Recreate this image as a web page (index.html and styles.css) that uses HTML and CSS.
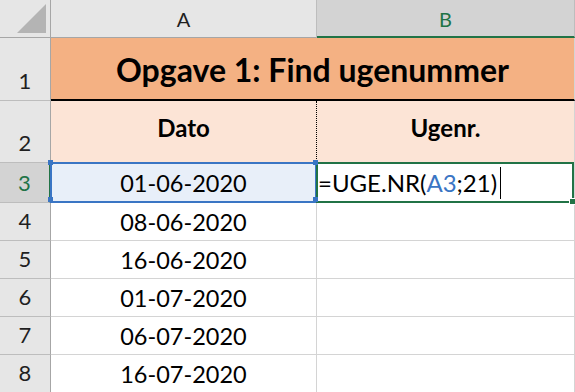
FILE: index.html
```html
<!DOCTYPE html>
<html lang="da">
<head>
  <meta charset="UTF-8">
  <title>Opgave 1</title>
  <link rel="stylesheet" href="styles.css">
</head>
<body>
  <div class="sheet">
    <!-- kolonneoverskrifter -->
    <div class="corner"><span class="tri"></span></div>
    <div class="colhead">A</div>
    <div class="colhead active">B</div>

    <div class="rowhead">1</div>
    <div class="cell title">Opgave 1: Find ugenummer</div>

    <div class="rowhead">2</div>
    <div class="cell head dotted">Dato</div>
    <div class="cell head">Ugenr.</div>

    <div class="rowhead active">3</div>
    <div class="cell date ref">01-06-2020</div>
    <div class="cell edit">=UGE.NR(<span class="refText">A3</span>;21)<span class="caret"></span></div>

    <div class="rowhead">4</div>
    <div class="cell date">08-06-2020</div>
    <div class="cell"></div>

    <div class="rowhead">5</div>
    <div class="cell date">16-06-2020</div>
    <div class="cell"></div>

    <div class="rowhead">6</div>
    <div class="cell date">01-07-2020</div>
    <div class="cell"></div>

    <div class="rowhead">7</div>
    <div class="cell date">06-07-2020</div>
    <div class="cell"></div>

    <div class="rowhead">8</div>
    <div class="cell date">16-07-2020</div>
    <div class="cell"></div>
  </div>
</body>
</html>
```

FILE: styles.css
```css
*{
  margin: 0;
  padding: 0;
  box-sizing: border-box;
}
body{
  background-color: #ffffff;
  font-family: Lato, "Open Sans", sans-serif;
  overflow: hidden;
}
.sheet{
  display: grid;
  grid-template-columns: 51px 266px 258px;
  grid-template-rows: 38px 63px 62px 40px repeat(5, 38px);
}
.corner{
  background-color: #e6e6e6;
  border-right: 1px solid #a6a6a6;
  border-bottom: 1px solid #a6a6a6;
  position: relative;
}
.tri{
  position: absolute;
  right: 4px;
  bottom: 4px;
  width: 0;
  height: 0;
  border-left: 29px solid transparent;
  border-bottom: 29px solid #b4b4b4;
}
.colhead{
  background-color: #e6e6e6;
  border-right: 1px solid #bdbdbd;
  border-bottom: 1px solid #a6a6a6;
  display: flex;
  align-items: center;
  justify-content: center;
  font-size: 20px;
  color: #1f1f1f;
  padding-top: 1px;
}
.colhead.active{
  background-color: #d3d3d3;
  color: #217346;
  border-bottom: 2px solid #217346;
  border-right: 1px solid #bdbdbd;
}
.rowhead{
  background-color: #e6e6e6;
  border-right: 1px solid #a6a6a6;
  border-bottom: 1px solid #bdbdbd;
  display: flex;
  align-items: flex-end;
  justify-content: center;
  font-size: 22px;
  color: #1f1f1f;
  padding-bottom: 6px;
}
.rowhead.active{
  background-color: #d3d3d3;
  color: #217346;
  border-right: 2px solid #217346;
}
.cell{
  border-right: 1px solid #d4d4d4;
  border-bottom: 1px solid #d4d4d4;
  display: flex;
  align-items: center;
  font-size: 23.5px;
  color: #000;
  position: relative;
}
.title{
  grid-column: span 2;
  background-color: #f4b183;
  border-bottom: 2px solid #000;
  justify-content: center;
  font-weight: 700;
  font-size: 32px;
  padding-top: 2px;
}
.head{
  background-color: #fce4d6;
  justify-content: center;
  font-weight: 700;
  font-size: 24px;
  padding-bottom: 8px;
}
.head.dotted{
  border-right: 1px dotted #000;
}
.date{
  justify-content: center;
}
/* markering af A3 når formlen refererer til den */
.ref{
  background-color: #e8eff9;
}
.ref::after{
  content: "";
  position: absolute;
  left: -1px;
  top: -1px;
  right: -1px;
  bottom: -1px;
  border: 2px solid #3a75c4;
}
.ref::before{
  content: "";
  position: absolute;
  left: -3px;
  top: -3px;
  width: 5px;
  height: 5px;
  background-color: #3a75c4;
  box-shadow: 0 37px 0 #3a75c4, 265px 37px 0 #3a75c4, 265px 0 0 #3a75c4;
  z-index: 2;
}
.edit{
  padding-left: 1px;
  font-size: 24px;
}
.edit::after{
  content: "";
  position: absolute;
  left: -1px;
  top: -1px;
  right: 0;
  bottom: -1px;
  border: 2px solid #217346;
}
.edit::before{
  content: "";
  position: absolute;
  right: -2px;
  bottom: -3px;
  width: 5px;
  height: 5px;
  background-color: #217346;
  border: 1px solid #ffffff;
  z-index: 2;
}
.refText{
  color: #3a75c4;
}
.caret{
  display: inline-block;
  width: 1px;
  height: 32px;
  background-color: #000;
  margin-left: 3px;
}
```
